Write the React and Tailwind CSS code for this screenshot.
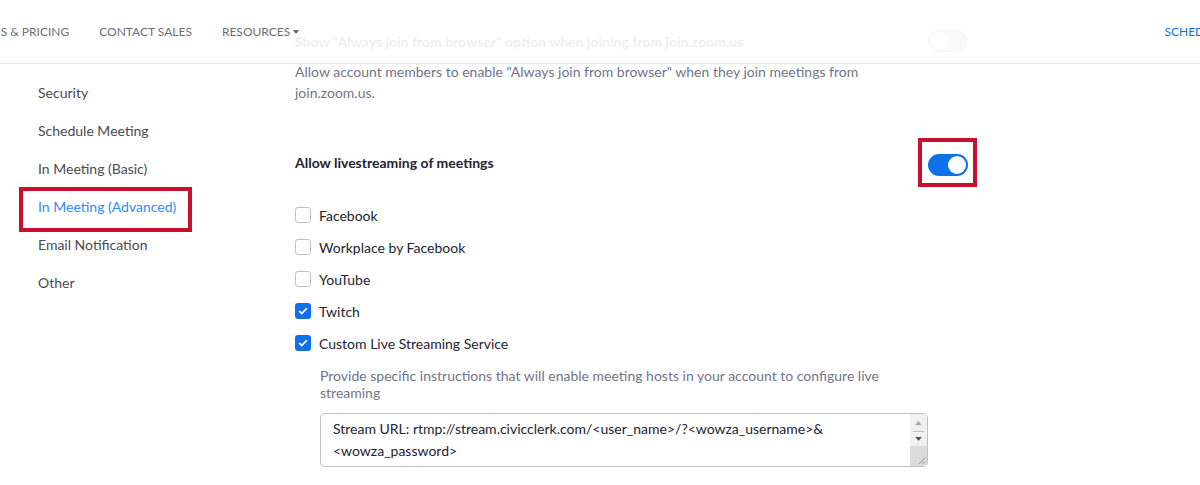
import React from 'react';

const sideItems = ['Security', 'Schedule Meeting', 'In Meeting (Basic)', 'In Meeting (Advanced)', 'Email Notification', 'Other'];

const services = [
  { label: 'Facebook', checked: false },
  { label: 'Workplace by Facebook', checked: false },
  { label: 'YouTube', checked: false },
  { label: 'Twitch', checked: true },
  { label: 'Custom Live Streaming Service', checked: true },
];

const Toggle = ({ on }) => (
  <div className={`relative h-[22px] w-[40px] rounded-full ${on ? 'bg-[#0e71eb]' : 'bg-[#b6b6bc]'}`}>
    <span
      className={`absolute top-[2px] h-[18px] w-[18px] rounded-full bg-white ${on ? 'right-[2px]' : 'left-[2px]'}`}
    />
  </div>
);

const Checkbox = ({ checked }) =>
  checked ? (
    <span className="flex h-4 w-4 items-center justify-center rounded-[3px] bg-[#0e71eb]">
      <svg viewBox="0 0 16 16" className="h-3 w-3" fill="none" stroke="white" strokeWidth="2.4" strokeLinecap="round" strokeLinejoin="round">
        <path d="M3.5 8.5l3 2.8 6-6.3" />
      </svg>
    </span>
  ) : (
    <span className="block h-4 w-4 rounded-[3px] border border-[#c1c1c9] bg-white" />
  );

const App = () => {
  return (
    <div className="relative h-[485px] w-[1200px] overflow-hidden bg-white font-['Lato','Liberation_Sans',sans-serif] text-[14px]">
      {/* Top nav, sits over the scrolled page */}
      <div className="absolute inset-x-0 top-0 z-10 flex h-[64px] items-center border-b border-[#e8e8ec] bg-white/[0.92] text-[12px] text-[#6e6e78]">
        <div className="ml-[-30px] flex items-center gap-[30px] pt-[1px]">
          <span>PLANS &amp; PRICING</span>
          <span>CONTACT SALES</span>
          <span className="flex items-center">
            RESOURCES
            <svg viewBox="0 0 8 5" className="ml-[2px] h-[4px] w-[8px]" fill="#6e6e78">
              <path d="M0 0h8L4 5z" />
            </svg>
          </span>
        </div>
        <span className="ml-auto mr-[-93px] whitespace-nowrap pt-[1px] text-[#0e71eb]">SCHEDULE A MEETING</span>
      </div>

      <div className="flex">
        {/* Sidebar */}
        <div className="w-[295px] shrink-0 pt-[73px]">
          {sideItems.map((item) => {
            const active = item === 'In Meeting (Advanced)';
            return (
              <div key={item} className="relative flex h-[38px] items-center pl-[38px]">
                <span className={active ? 'text-[#2d8cff]' : 'text-[#4a4a52]'}>{item}</span>
                {active && (
                  <span className="absolute left-[19px] top-0 h-[45px] w-[173px] border-4 border-[#c8102e]" />
                )}
              </div>
            );
          })}
        </div>

        {/* Settings */}
        <div className="w-[673px] pt-[30px]">
          <div className="flex h-[22px] items-center justify-between">
            <span className="font-bold text-[#232333]">Show "Always join from browser" option when joining from join.zoom.us</span>
            <Toggle on={false} />
          </div>
          <p className="mt-[9px] w-[600px] leading-[21px] text-[#747487]">
            Allow account members to enable "Always join from browser" when they join meetings from join.zoom.us.
          </p>

          <div className="mt-[51px] flex h-[22px] items-center justify-between">
            <span className="mt-[-5px] font-bold text-[#232333]">Allow livestreaming of meetings</span>
            <div className="relative">
              <Toggle on />
              <span className="absolute left-[-10px] top-[-16px] h-[49px] w-[59px] border-4 border-[#c8102e]" />
            </div>
          </div>

          <div className="mt-[23px]">
            {services.map((s) => (
              <label key={s.label} className="flex h-[32px] items-center gap-2 text-[#232333]">
                <Checkbox checked={s.checked} />
                <span>{s.label}</span>
              </label>
            ))}
          </div>

          <div className="pl-[25px]">
            <p className="mt-[8px] w-[580px] leading-[17px] text-[#747487]">
              Provide specific instructions that will enable meeting hosts in your account to configure live streaming
            </p>
            <div className="mt-[12px] flex h-[54px] w-[608px] overflow-hidden rounded-[5px] border border-[#bfbfc7] bg-white">
              <div className="flex-1 px-[12px] pt-[4px] leading-[22px] text-[#232333]">
                Stream URL: rtmp://stream.civicclerk.com/&lt;user_name&gt;/?&lt;wowza_username&gt;&amp;
                <br />
                &lt;wowza_password&gt;
              </div>
              <div className="flex w-[17px] flex-col bg-[#f1f1f1]">
                <div className="flex h-[17px] items-center justify-center">
                  <svg viewBox="0 0 8 5" className="h-[4px] w-[7px]" fill="#a3a3a3">
                    <path d="M4 0l4 5H0z" />
                  </svg>
                </div>
                <div className="mx-[3px] h-px bg-[#c1c1c1]" />
                <div className="flex h-[14px] items-center justify-center">
                  <svg viewBox="0 0 8 5" className="h-[4px] w-[7px]" fill="#505050">
                    <path d="M0 0h8L4 5z" />
                  </svg>
                </div>
                <div className="flex flex-1 items-end justify-end bg-[#dcdcdc] p-[1px]">
                  <svg viewBox="0 0 10 10" className="h-[9px] w-[9px]" stroke="#8a8a8a" strokeWidth="1">
                    <path d="M9 2L2 9M9 6L6 9" />
                  </svg>
                </div>
              </div>
            </div>
          </div>
        </div>
      </div>
    </div>
  );
};

export default App;
